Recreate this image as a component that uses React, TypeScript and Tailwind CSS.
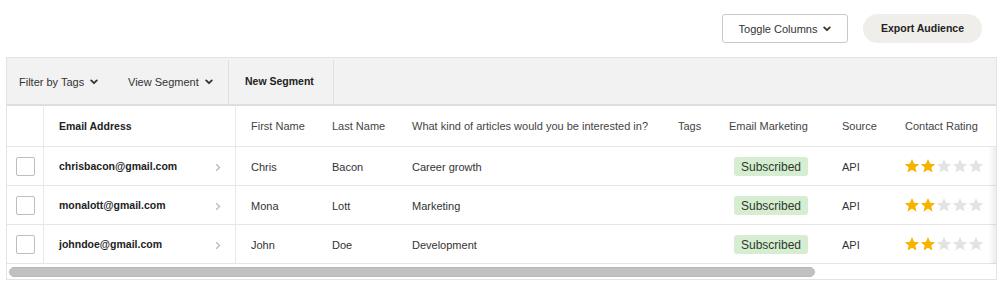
import React from "react";

const rows = [
  { email: "chrisbacon@gmail.com", first: "Chris", last: "Bacon", topic: "Career growth" },
  { email: "monalott@gmail.com", first: "Mona", last: "Lott", topic: "Marketing" },
  { email: "johndoe@gmail.com", first: "John", last: "Doe", topic: "Development" },
];

const cols = "grid grid-cols-[37px_192px_80px_80px_266px_51px_113px_63px_150px]";

function Chevron() {
  return (
    <svg width="8" height="6" viewBox="0 0 8 6" className="ml-[6px]">
      <path d="M1.2 1.4 L4 4.2 L6.8 1.4" fill="none" stroke="#333" strokeWidth="1.8" strokeLinecap="round" strokeLinejoin="round" />
    </svg>
  );
}

function Star({ on }: { on: boolean }) {
  return (
    <svg width="16" height="16" viewBox="0 0 24 24">
      <path
        d="M12 1.5 L15.1 8.5 L22.8 9.2 L17 14.2 L18.7 21.8 L12 17.8 L5.3 21.8 L7 14.2 L1.2 9.2 L8.9 8.5 Z"
        fill={on ? "#f6b400" : "#e3e3e3"}
      />
    </svg>
  );
}

export default function App() {
  return (
    <div className="w-[1007px] h-[296px] bg-white font-['Liberation_Sans',Arial,sans-serif] text-[11px] text-[#333] overflow-hidden">
      <div className="h-[57px] flex justify-end items-start gap-[15px] pt-[14px] pr-[25px]">
        <button className="h-[29px] w-[126px] pt-[1px] border border-[#c9c9c9] rounded-[3px] flex items-center justify-center text-[11px] text-[#333] bg-white">
          Toggle Columns
          <Chevron />
        </button>
        <button className="h-[29px] w-[119px] pt-[1px] rounded-full bg-[#efeeea] flex items-center justify-center font-bold text-[10.5px] text-[#222]">
          Export Audience
        </button>
      </div>

      <div className="ml-[6px] w-[991px] border border-[#e3e3e3]">
        <div className="h-[48px] pt-[2px] bg-[#f2f2f2] border-b-2 border-[#dedede] flex items-stretch">
          <div className="w-[109px] pl-[12px] flex items-center">
            Filter by Tags
            <Chevron />
          </div>
          <div className="w-[113px] pl-[12px] flex items-center border-r border-[#e0e0e0]">
            View Segment
            <Chevron />
          </div>
          <div className="w-[105px] pl-[16px] flex items-center border-r border-[#e0e0e0] font-bold text-[10.5px] text-[#222]">
            New Segment
          </div>
        </div>

        <div className="relative overflow-hidden">
          <div className="w-[1032px]">
            <div className={`${cols} h-[41px] pt-[1px] border-b border-[#e6e6e6] text-[#444]`}>
              <div className="border-r border-[#e8e8e8]" />
              <div className="pl-[15px] flex items-center border-r border-[#e8e8e8] font-bold text-[10.5px] text-[#222]">Email Address</div>
              <div className="pl-[15px] flex items-center">First Name</div>
              <div className="pl-[16px] flex items-center">Last Name</div>
              <div className="pl-[16px] flex items-center">What kind of articles would you be interested in?</div>
              <div className="pl-[16px] flex items-center">Tags</div>
              <div className="pl-[16px] flex items-center">Email Marketing</div>
              <div className="pl-[16px] flex items-center">Source</div>
              <div className="pl-[16px] flex items-center">Contact Rating</div>
            </div>
            {rows.map((r) => (
              <div key={r.email} className={`${cols} h-[39px] border-b border-[#e6e6e6]`}>
                <div className="border-r border-[#e8e8e8] flex items-center pl-[9px]">
                  <div className="w-[19px] h-[19px] border border-[#bdbdbd] rounded-[2px] bg-white" />
                </div>
                <div className="pl-[15px] pr-[14px] pt-[2px] flex items-center justify-between border-r border-[#e8e8e8]">
                  <span className="font-bold text-[10.5px] text-[#222]">{r.email}</span>
                  <svg width="6" height="9" viewBox="0 0 6 9">
                    <path d="M1.2 1.2 L4.5 4.5 L1.2 7.8" fill="none" stroke="#b8b8b8" strokeWidth="1.3" />
                  </svg>
                </div>
                <div className="pl-[15px] pt-[2px] flex items-center">{r.first}</div>
                <div className="pl-[16px] pt-[2px] flex items-center">{r.last}</div>
                <div className="pl-[16px] pt-[2px] flex items-center">{r.topic}</div>
                <div />
                <div className="pl-[21px] flex items-center">
                  <span className="h-[19px] px-[7px] pt-[1px] rounded-[3px] bg-[#d6edd1] text-[12px] text-[#2c3a2c] flex items-center">Subscribed</span>
                </div>
                <div className="pl-[16px] pt-[2px] flex items-center">API</div>
                <div className="pl-[15px] flex items-center">
                  <Star on />
                  <Star on />
                  <Star on={false} />
                  <Star on={false} />
                  <Star on={false} />
                </div>
              </div>
            ))}
          </div>
          <div className="absolute right-0 top-[41px] bottom-0 w-[8px] bg-gradient-to-r from-transparent to-[#00000012]" />
        </div>

        <div className="h-[15px] pt-[3px] pl-[2px]">
          <div className="h-[10px] w-[806px] rounded-full bg-[#c1c1c1] border border-[#b8b8b8]" />
        </div>
      </div>
    </div>
  );
}
